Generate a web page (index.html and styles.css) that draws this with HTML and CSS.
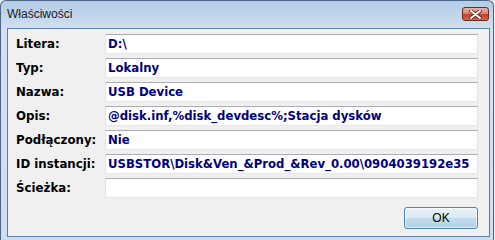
FILE: index.html
```html
<!DOCTYPE html>
<html lang="pl">
<head>
    <meta charset="UTF-8">
    <title>Właściwości</title>
    <link rel="stylesheet" href="styles.css">
</head>
<body>
    <div class="window">
        <div class="titlebar">
            <span class="title">Właściwości</span>
            <button class="close-btn" type="button" aria-label="Zamknij">
                <svg width="13" height="9" viewBox="0 0 13 9">
                    <path d="M2 1 L11 8 M11 1 L2 8" stroke="#5a1d14" stroke-width="3.6" stroke-linecap="round"/>
                    <path d="M2 1 L11 8 M11 1 L2 8" stroke="#fff" stroke-width="2" stroke-linecap="round"/>
                </svg>
            </button>
        </div>
        <div class="client">
            <div class="props">
                <label>Litera:</label>
                <div class="field">D:\</div>
                <label>Typ:</label>
                <div class="field">Lokalny</div>
                <label>Nazwa:</label>
                <div class="field">USB Device</div>
                <label>Opis:</label>
                <div class="field">@disk.inf,%disk_devdesc%;Stacja dysków</div>
                <label>Podłączony:</label>
                <div class="field">Nie</div>
                <label>ID instancji:</label>
                <div class="field">USBSTOR\Disk&amp;Ven_&amp;Prod_&amp;Rev_0.00\0904039192e35</div>
                <label>Ścieżka:</label>
                <div class="field"></div>
            </div>
            <div class="buttons">
                <button class="ok-btn" type="button">OK</button>
            </div>
        </div>
    </div>
</body>
</html>
```

FILE: styles.css
```css
body {
    margin: 0;
    background-color: #e6eef7;
    font-family: "DejaVu Sans", sans-serif;
}
.window {
    width: 494px;
    height: 240px;
    box-sizing: border-box;
    border: 1px solid #4d6886;
    border-bottom: none;
    border-radius: 6px 6px 0 0;
    padding: 0 3px 3px 6px;
    background: linear-gradient(to bottom, #b4cce6 0px, #c6d9ee 20px, #d3e2f2 28px, #cddef0 100%);
    display: flex;
    flex-direction: column;
}
.titlebar {
    height: 27px;
    display: flex;
    align-items: center;
}
.title {
    font-family: "Liberation Sans", sans-serif;
    font-size: 12px;
    color: #1b1b1b;
    margin-top: -1px;
}
.close-btn {
    margin-left: auto;
    margin-right: 1px;
    margin-top: -1px;
    width: 27px;
    height: 14px;
    padding: 0;
    border: 1px solid #6b2a20;
    border-radius: 3px;
    background: linear-gradient(to bottom, #e9b3a8 0%, #d8857a 45%, #c1412c 55%, #d3694f 100%);
    display: flex;
    align-items: center;
    justify-content: center;
}
.client {
    flex: 1;
    background-color: #f0f0f0;
    border: 1px solid #5f7e9e;
    padding: 5px 11px 6px 8px;
    display: flex;
    flex-direction: column;
}
.props {
    display: grid;
    grid-template-columns: 89px 1fr;
    grid-auto-rows: 20px;
    row-gap: 4px;
}
.props label {
    font-weight: bold;
    font-size: 11.8px;
    color: #000;
    line-height: 20px;
}
.field {
    box-sizing: border-box;
    height: 20px;
    background-color: #fff;
    border: 1px solid #e2e6eb;
    border-top-color: #abadb3;
    border-left-color: #e2e3ea;
    padding: 0 2px;
    font-weight: bold;
    font-size: 11.7px;
    line-height: 18px;
    color: #00007f;
    white-space: nowrap;
    overflow: hidden;
}
.buttons {
    display: flex;
    justify-content: flex-end;
    margin-top: 9px;
}
.ok-btn {
    width: 74px;
    height: 22px;
    border: 1px solid #4a86b4;
    border-radius: 3px;
    background: linear-gradient(to bottom, #e8f2f9 0%, #d9e9f5 50%, #c4dced 50%, #b3d1e8 100%);
    box-shadow: inset 0 0 0 1px rgba(255, 255, 255, 0.6);
    font-family: "Liberation Sans", sans-serif;
    font-size: 12px;
    color: #000;
    padding: 0;
}
```
